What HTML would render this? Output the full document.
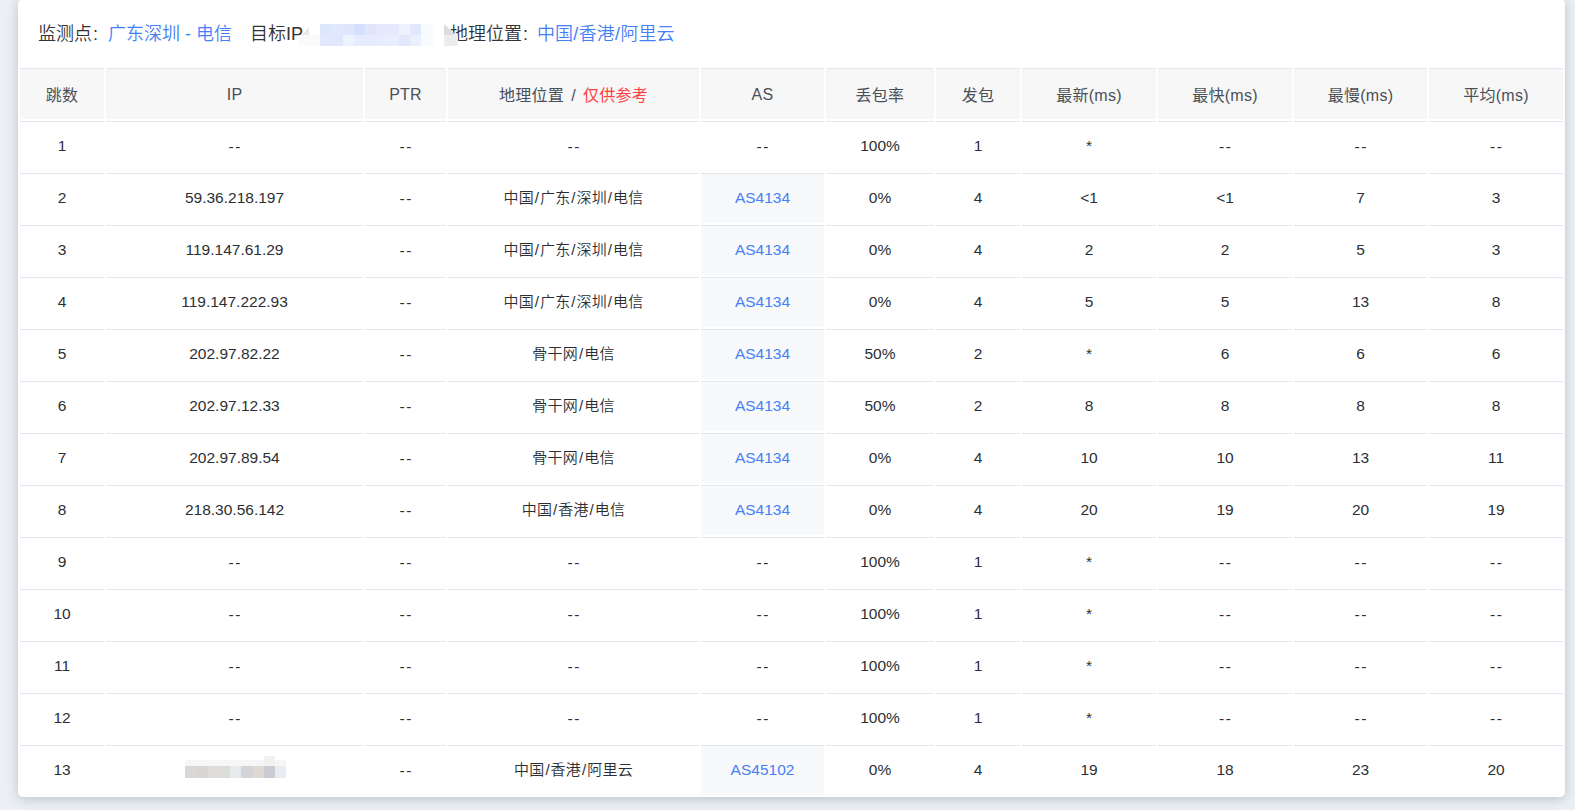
<!DOCTYPE html>
<html lang="zh-CN"><head><meta charset="utf-8"><title>traceroute</title>
<style>
*{box-sizing:border-box}
html,body{margin:0;padding:0}
body{width:1575px;height:810px;overflow:hidden;background:#ecf0f5;font-family:"Liberation Sans","Noto Sans CJK SC",sans-serif;color:#212529;position:relative;font-weight:350}
.card{position:absolute;left:18px;top:-1px;width:1547px;height:798px;background:#fff;border-radius:5px;box-shadow:0 2px 12px rgba(112,128,150,.42)}
.title{position:absolute;left:20px;top:20px;height:30px;line-height:30px;font-size:18px;color:#333;white-space:nowrap}
.title a,.title .b{color:#4580f8;text-decoration:none}
.title span.abs{position:absolute;top:0}
table{position:absolute;left:0;top:67px;width:1547px;border-collapse:separate;border-spacing:2px;table-layout:fixed;font-size:15px}
th,td{padding:0;text-align:center;vertical-align:middle;border-top:1px solid #e2e7ed;white-space:nowrap;overflow:hidden}
th{height:51px;background:#f7f7f7;color:#495057;font-weight:400;font-size:16px}
td{height:50px;color:#2b2f33;font-size:15.5px;line-height:18px;padding-bottom:1px}
td.c{font-size:15px;letter-spacing:.25px;padding-bottom:2px}
td.as{background:#f8f9fb}
td a{color:#4580f8;text-decoration:none}
.red{color:#ff4040}
.s{margin:0 .055em}
.s2{margin:0 .02em}
th{word-spacing:2.4px;letter-spacing:.25px}
th{padding-bottom:1px}
th.lat{padding-top:2px;padding-bottom:0}
.dd{letter-spacing:1.5px;margin-right:-1.5px;position:relative;top:1px}
.mz{display:inline-block;position:relative;width:101px;height:22px;vertical-align:middle;top:-3px;left:1px}
.mz i{position:absolute;display:block}
.bz{position:absolute;left:0;top:0}
.bz i{position:absolute;display:block}
</style></head><body>
<div class="card">
<div class="title"><span class="abs" style="left:0">监测点<span style="margin-left:1px">:</span></span><span class="abs b" style="left:70px">广东深圳 - 电信</span><span class="abs" style="left:212px">目标IP</span><span class="abs" style="left:412px">地理位置<span style="margin-left:1px">:</span></span><span class="abs b" style="left:499px">中国<span class="s2">/</span>香港<span class="s2">/</span>阿里云</span><span class="bz"><i style="left:261px;top:16px;width:21px;height:11px;background:#fafafa"></i><i style="left:264px;top:8px;width:0;height:0;border-left:7px solid transparent;border-bottom:8px solid #e6e6e6"></i><i style="left:282px;top:5px;width:11px;height:11px;background:#dce6fc"></i><i style="left:282px;top:16px;width:11px;height:11px;background:#e2e8fc"></i><i style="left:293px;top:5px;width:12px;height:11px;background:#e0e8fc"></i><i style="left:293px;top:16px;width:12px;height:11px;background:#e2e8fc"></i><i style="left:305px;top:5px;width:11px;height:11px;background:#e2e6fc"></i><i style="left:305px;top:16px;width:11px;height:11px;background:#eef2fd"></i><i style="left:316px;top:5px;width:11px;height:11px;background:#d6dffb"></i><i style="left:316px;top:16px;width:11px;height:11px;background:#e6ecfd"></i><i style="left:327px;top:5px;width:11px;height:11px;background:#e2e6fc"></i><i style="left:327px;top:16px;width:11px;height:11px;background:#e6ecfd"></i><i style="left:338px;top:5px;width:12px;height:11px;background:#e4eafc"></i><i style="left:338px;top:16px;width:12px;height:11px;background:#e8ecfd"></i><i style="left:350px;top:5px;width:11px;height:11px;background:#e4eafc"></i><i style="left:350px;top:16px;width:11px;height:11px;background:#e8eefd"></i><i style="left:361px;top:5px;width:11px;height:11px;background:#eef2fd"></i><i style="left:361px;top:16px;width:11px;height:11px;background:#e2e8fc"></i><i style="left:372px;top:5px;width:11px;height:11px;background:#e2e8fc"></i><i style="left:372px;top:16px;width:11px;height:11px;background:#eaf0fd"></i><i style="left:383px;top:5px;width:12px;height:11px;background:#f8fbfe"></i><i style="left:383px;top:16px;width:12px;height:11px;background:#f8fbfe"></i><i style="left:406px;top:16px;width:14px;height:11px;background:#ececec"></i><i style="left:406px;top:5px;width:0;height:0;border-right:12px solid transparent;border-bottom:11px solid #dddde1"></i></span></div>
<table><colgroup>
<col style="width:84px">
<col style="width:257px">
<col style="width:81px">
<col style="width:251px">
<col style="width:123px">
<col style="width:108px">
<col style="width:84px">
<col style="width:134px">
<col style="width:134px">
<col style="width:133px">
<col style="width:134px">
</colgroup><thead><tr>
<th>跳数</th>
<th class="lat">IP</th>
<th class="lat">PTR</th>
<th>地理位置 / <span class="red">仅供参考</span></th>
<th class="lat">AS</th>
<th>丢包率</th>
<th>发包</th>
<th>最新(ms)</th>
<th>最快(ms)</th>
<th>最慢(ms)</th>
<th>平均(ms)</th>
</tr></thead><tbody>
<tr>
<td>1</td>
<td><span class="dd">--</span></td>
<td><span class="dd">--</span></td>
<td><span class="dd">--</span></td>
<td><span class="dd">--</span></td>
<td>100%</td>
<td>1</td>
<td>*</td>
<td><span class="dd">--</span></td>
<td><span class="dd">--</span></td>
<td><span class="dd">--</span></td>
</tr>
<tr>
<td>2</td>
<td>59.36.218.197</td>
<td><span class="dd">--</span></td>
<td class="c">中国<span class="s">/</span>广东<span class="s">/</span>深圳<span class="s">/</span>电信</td>
<td class="as"><a>AS4134</a></td>
<td>0%</td>
<td>4</td>
<td>&lt;1</td>
<td>&lt;1</td>
<td>7</td>
<td>3</td>
</tr>
<tr>
<td>3</td>
<td>119.147.61.29</td>
<td><span class="dd">--</span></td>
<td class="c">中国<span class="s">/</span>广东<span class="s">/</span>深圳<span class="s">/</span>电信</td>
<td class="as"><a>AS4134</a></td>
<td>0%</td>
<td>4</td>
<td>2</td>
<td>2</td>
<td>5</td>
<td>3</td>
</tr>
<tr>
<td>4</td>
<td>119.147.222.93</td>
<td><span class="dd">--</span></td>
<td class="c">中国<span class="s">/</span>广东<span class="s">/</span>深圳<span class="s">/</span>电信</td>
<td class="as"><a>AS4134</a></td>
<td>0%</td>
<td>4</td>
<td>5</td>
<td>5</td>
<td>13</td>
<td>8</td>
</tr>
<tr>
<td>5</td>
<td>202.97.82.22</td>
<td><span class="dd">--</span></td>
<td class="c">骨干网<span class="s">/</span>电信</td>
<td class="as"><a>AS4134</a></td>
<td>50%</td>
<td>2</td>
<td>*</td>
<td>6</td>
<td>6</td>
<td>6</td>
</tr>
<tr>
<td>6</td>
<td>202.97.12.33</td>
<td><span class="dd">--</span></td>
<td class="c">骨干网<span class="s">/</span>电信</td>
<td class="as"><a>AS4134</a></td>
<td>50%</td>
<td>2</td>
<td>8</td>
<td>8</td>
<td>8</td>
<td>8</td>
</tr>
<tr>
<td>7</td>
<td>202.97.89.54</td>
<td><span class="dd">--</span></td>
<td class="c">骨干网<span class="s">/</span>电信</td>
<td class="as"><a>AS4134</a></td>
<td>0%</td>
<td>4</td>
<td>10</td>
<td>10</td>
<td>13</td>
<td>11</td>
</tr>
<tr>
<td>8</td>
<td>218.30.56.142</td>
<td><span class="dd">--</span></td>
<td class="c">中国<span class="s">/</span>香港<span class="s">/</span>电信</td>
<td class="as"><a>AS4134</a></td>
<td>0%</td>
<td>4</td>
<td>20</td>
<td>19</td>
<td>20</td>
<td>19</td>
</tr>
<tr>
<td>9</td>
<td><span class="dd">--</span></td>
<td><span class="dd">--</span></td>
<td><span class="dd">--</span></td>
<td><span class="dd">--</span></td>
<td>100%</td>
<td>1</td>
<td>*</td>
<td><span class="dd">--</span></td>
<td><span class="dd">--</span></td>
<td><span class="dd">--</span></td>
</tr>
<tr>
<td>10</td>
<td><span class="dd">--</span></td>
<td><span class="dd">--</span></td>
<td><span class="dd">--</span></td>
<td><span class="dd">--</span></td>
<td>100%</td>
<td>1</td>
<td>*</td>
<td><span class="dd">--</span></td>
<td><span class="dd">--</span></td>
<td><span class="dd">--</span></td>
</tr>
<tr>
<td>11</td>
<td><span class="dd">--</span></td>
<td><span class="dd">--</span></td>
<td><span class="dd">--</span></td>
<td><span class="dd">--</span></td>
<td>100%</td>
<td>1</td>
<td>*</td>
<td><span class="dd">--</span></td>
<td><span class="dd">--</span></td>
<td><span class="dd">--</span></td>
</tr>
<tr>
<td>12</td>
<td><span class="dd">--</span></td>
<td><span class="dd">--</span></td>
<td><span class="dd">--</span></td>
<td><span class="dd">--</span></td>
<td>100%</td>
<td>1</td>
<td>*</td>
<td><span class="dd">--</span></td>
<td><span class="dd">--</span></td>
<td><span class="dd">--</span></td>
</tr>
<tr>
<td>13</td>
<td><span class="mz"><i style="left:0;top:4px;width:101px;height:6px;background:#f6f6f6"></i><i style="left:79px;top:0;width:11px;height:10px;background:#f1f1f1"></i><i style="left:0;top:10px;width:12px;height:12px;background:#d9d8d6"></i><i style="left:12px;top:10px;width:11px;height:12px;background:#d7d6d4"></i><i style="left:23px;top:10px;width:11px;height:12px;background:#dedbd8"></i><i style="left:34px;top:10px;width:11px;height:12px;background:#dcddd8"></i><i style="left:45px;top:10px;width:11px;height:12px;background:#e6eaed"></i><i style="left:56px;top:10px;width:12px;height:12px;background:#d3d4d8"></i><i style="left:68px;top:10px;width:11px;height:12px;background:#e2d8d3"></i><i style="left:79px;top:10px;width:11px;height:12px;background:#cbcbd3"></i><i style="left:90px;top:10px;width:11px;height:12px;background:#e9edf2"></i></span></td>
<td><span class="dd">--</span></td>
<td class="c">中国<span class="s">/</span>香港<span class="s">/</span>阿里云</td>
<td class="as"><a>AS45102</a></td>
<td>0%</td>
<td>4</td>
<td>19</td>
<td>18</td>
<td>23</td>
<td>20</td>
</tr>
</tbody></table></div></body></html>
